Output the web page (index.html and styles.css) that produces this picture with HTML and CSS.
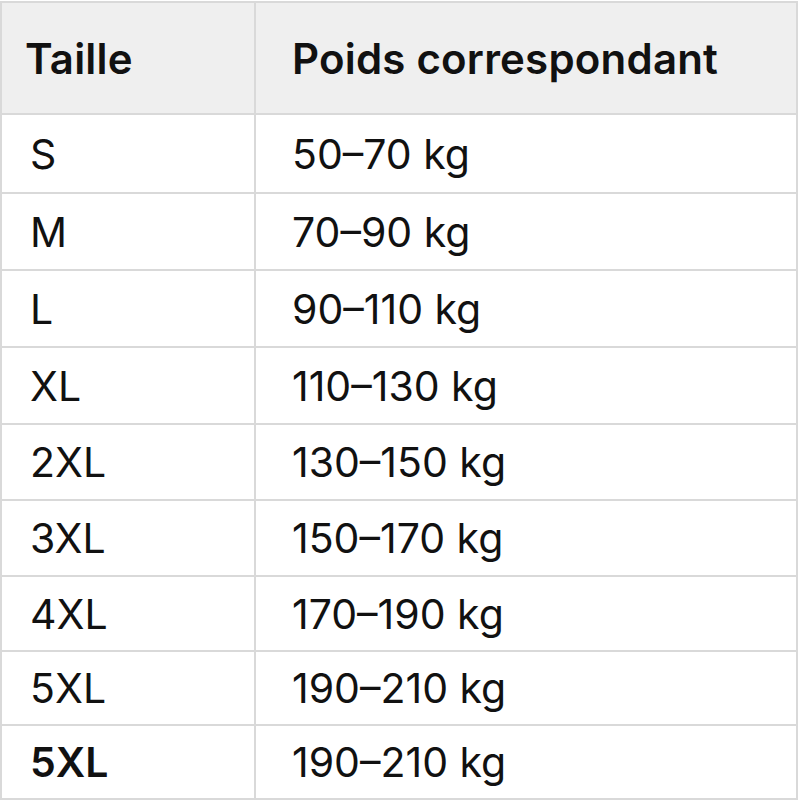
FILE: index.html
```html
<!DOCTYPE html>
<html lang="fr">
<head>
<meta charset="utf-8">
<link rel="stylesheet" href="styles.css">
</head>
<body>
<table class="size-table">
  <thead>
    <tr><th class="c1">Taille</th><th class="c2">Poids correspondant</th></tr>
  </thead>
  <tbody>
    <tr><td class="c1">S</td><td class="c2">50–70 kg</td></tr>
    <tr><td class="c1">M</td><td class="c2">70–90 kg</td></tr>
    <tr><td class="c1">L</td><td class="c2">90–110 kg</td></tr>
    <tr><td class="c1">XL</td><td class="c2">110–130 kg</td></tr>
    <tr><td class="c1">2XL</td><td class="c2">130–150 kg</td></tr>
    <tr><td class="c1">3XL</td><td class="c2">150–170 kg</td></tr>
    <tr><td class="c1">4XL</td><td class="c2">170–190 kg</td></tr>
    <tr><td class="c1">5XL</td><td class="c2">190–210 kg</td></tr>
    <tr><td class="c1 strong">5XL</td><td class="c2">190–210 kg</td></tr>
  </tbody>
</table>
</body>
</html>
```
FILE: styles.css
```css
html, body {
  margin: 0;
  padding: 0;
  background: #ffffff;
}
body {
  padding: 1px 2px 0 0;
  font-family: Inter, "Liberation Sans", sans-serif;
  color: #111111;
}
.size-table {
  width: 798px;
  border-collapse: collapse;
  table-layout: fixed;
}
.size-table th,
.size-table td {
  border: 2px solid #d9d9d9;
  text-align: left;
  vertical-align: middle;
  padding: 0;
  white-space: nowrap;
}
.size-table th {
  background: #efefef;
  font-weight: 600;
  font-size: 42px;
  letter-spacing: 0.2px;
  height: 110px;
}
.size-table td {
  font-weight: 400;
  font-size: 41px;
  height: 74px;
}
.size-table tbody tr:nth-child(1) td { height: 77px; }
.size-table tbody tr:nth-child(2) td,
.size-table tbody tr:nth-child(3) td,
.size-table tbody tr:nth-child(4) td { height: 75px; }
.size-table tbody tr:nth-child(7) td { height: 73px; }
.size-table tbody tr:nth-child(n+8) td { height: 72px; }
.size-table .c1 {
  width: 224px;
  padding-left: 28px;
}
.size-table th.c1 {
  width: 229px;
  padding-left: 23px;
}
.size-table .c2 {
  padding-left: 36px;
}
.size-table td.strong {
  font-weight: 600;
}
```
